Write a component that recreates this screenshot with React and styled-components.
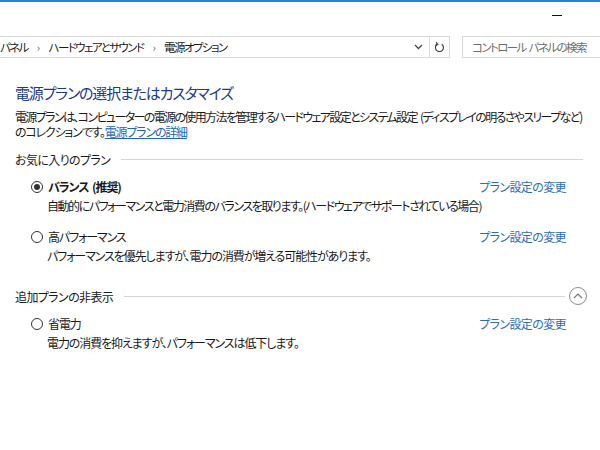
import React from "react";
import styled, { createGlobalStyle } from "styled-components";

const Global = createGlobalStyle`
  html, body { margin: 0; padding: 0; background: #fff; }
  body {
    font-family: "Noto Sans CJK JP", "Noto Sans", sans-serif;
    font-feature-settings: "palt";
    color: #1a1a1a;
    word-spacing: 2px;
    -webkit-font-smoothing: antialiased;
  }
`;

const Window = styled.div`
  width: 600px;
  height: 450px;
  overflow: hidden;
  border-top: 2px solid #2b7fd6;
  box-sizing: border-box;
  display: flex;
  flex-direction: column;
`;

const TitleBar = styled.div`
  height: 34px;
  display: flex;
  justify-content: flex-end;
  align-items: flex-start;
  padding-right: 38px;
`;

const Minimize = styled.div`
  width: 10px;
  height: 1px;
  background: #111;
  margin-top: 13px;
`;

const AddressRow = styled.div`
  display: flex;
  height: 22px;
  align-items: stretch;
  font-size: 11.5px;
  letter-spacing: -1.6px;
`;

const AddressBox = styled.div`
  width: 430px;
  box-sizing: border-box;
  border: 1px solid #d9d9d9;
  border-left: none;
  display: flex;
  align-items: center;
  white-space: nowrap;
  color: #1a1a1a;
`;

const Crumb = styled.span``;

const Sep = styled.span`
  color: #666;
  margin: 0 10px 0 9px;
  font-size: 11px;
`;

const DropChev = styled.span`
  margin-left: auto;
  margin-right: 6px;
  display: flex;
  align-items: center;
`;

const Refresh = styled.div`
  width: 20px;
  box-sizing: border-box;
  border: 1px solid #d9d9d9;
  border-left: none;
  display: flex;
  align-items: center;
  justify-content: center;
`;

const Search = styled.div`
  margin-left: 12px;
  flex: 1;
  box-sizing: border-box;
  border: 1px solid #d9d9d9;
  border-right: none;
  display: flex;
  align-items: center;
  padding-left: 9px;
  color: #6d6d6d;
  white-space: pre;
  letter-spacing: -1.6px;
`;

const Content = styled.div`
  padding: 0 17px 0 15px;
`;

const Title = styled.h1`
  margin: 24px 0 0;
  font-size: 15px;
  font-weight: 400;
  color: #1c3a8c;
  line-height: 22px;
  letter-spacing: -1.2px;
  white-space: nowrap;
`;

const Desc = styled.p`
  margin: 5px 0 0;
  font-size: 12px;
  line-height: 15px;
  white-space: pre;
`;

const DescLine = styled.span`
  display: block;
  letter-spacing: ${(p) => p.$ls || -1.2}px;
`;

const Link = styled.a`
  color: #1b66c4;
  text-decoration: ${(p) => (p.$underline ? "underline" : "none")};
  cursor: pointer;
`;

const GroupHeader = styled.div`
  display: flex;
  align-items: center;
  margin-top: ${(p) => p.$mt}px;
  font-size: 12px;
  height: 18px;
  letter-spacing: -0.6px;
`;

const Rule = styled.div`
  flex: 1;
  height: 1px;
  background: #d4d4d4;
  margin-left: 11px;
`;

const Collapse = styled.div`
  width: 18px;
  height: 18px;
  box-sizing: border-box;
  border: 1px solid #8c8c8c;
  border-radius: 50%;
  margin-left: 4px;
  margin-right: -4px;
  display: flex;
  align-items: center;
  justify-content: center;
`;

const Plan = styled.div`
  margin-top: ${(p) => p.$mt}px;
  margin-right: 17px;
  padding-left: 16px;
  display: grid;
  grid-template-columns: 1fr auto;
  row-gap: 3px;
  font-size: 12px;
  line-height: 16px;
  letter-spacing: -1.1px;
  white-space: pre;
`;

const PlanName = styled.div`
  display: flex;
  align-items: center;
  font-weight: ${(p) => (p.$bold ? 700 : 400)};
`;

const Radio = styled.span`
  width: 12px;
  height: 12px;
  box-sizing: border-box;
  border: 1px solid #333;
  border-radius: 50%;
  margin-right: 5px;
  display: flex;
  align-items: center;
  justify-content: center;
  &::after {
    content: "";
    width: 6px;
    height: 6px;
    border-radius: 50%;
    background: ${(p) => (p.$checked ? "#333" : "transparent")};
  }
`;

const PlanLink = styled(Link)`
  color: #2b6cc0;
  letter-spacing: -0.6px;
`;

const PlanDesc = styled.div`
  grid-column: 1 / 3;
  padding-left: 16px;
  letter-spacing: ${(p) => p.$ls || -1.1}px;
`;

const plans = [
  {
    name: "バランス (推奨)",
    bold: true,
    checked: true,
    ls: -1.45,
    desc: "自動的にパフォーマンスと電力消費のバランスを取ります。(ハードウェアでサポートされている場合)",
  },
  {
    name: "高パフォーマンス",
    desc: "パフォーマンスを優先しますが、電力の消費が増える可能性があります。",
  },
  {
    name: "省電力",
    desc: "電力の消費を抑えますが、パフォーマンスは低下します。",
  },
];

function PlanItem({ p, mt }) {
  return (
    <Plan $mt={mt}>
      <PlanName $bold={p.bold}>
        <Radio $checked={p.checked} />
        {p.name}
      </PlanName>
      <PlanLink>プラン設定の変更</PlanLink>
      <PlanDesc $ls={p.ls}>{p.desc}</PlanDesc>
    </Plan>
  );
}

export default function App() {
  return (
    <>
      <Global />
      <Window>
        <TitleBar>
          <Minimize />
        </TitleBar>
        <AddressRow>
          <AddressBox>
            <Crumb>パネル</Crumb>
            <Sep>›</Sep>
            <Crumb>ハードウェアとサウンド</Crumb>
            <Sep>›</Sep>
            <Crumb>電源オプション</Crumb>
            <DropChev>
              <svg width="9" height="6" viewBox="0 0 9 6">
                <path d="M1 1 L4.5 4.5 L8 1" fill="none" stroke="#444" strokeWidth="1.3" />
              </svg>
            </DropChev>
          </AddressBox>
          <Refresh>
            <svg width="11" height="12" viewBox="0 0 11 12">
              <path d="M7.6 3.2 A4 4 0 1 1 3.2 3.3" fill="none" stroke="#444" strokeWidth="1.2" />
              <path d="M2 1.2 L3.8 3.4 L1.2 4.4" fill="none" stroke="#444" strokeWidth="1.2" />
            </svg>
          </Refresh>
          <Search>コントロール パネルの検索</Search>
        </AddressRow>
        <Content>
          <Title>電源プランの選択またはカスタマイズ</Title>
          <Desc>
            <DescLine $ls={-1.63}>
              電源プランは、コンピューターの電源の使用方法を管理するハードウェア設定とシステム設定 (ディスプレイの明るさやスリープなど)
            </DescLine>
            <DescLine>
              のコレクションです。<Link $underline>電源プランの詳細</Link>
            </DescLine>
          </Desc>
          <GroupHeader $mt={11}>
            お気に入りのプラン
            <Rule />
          </GroupHeader>
          <PlanItem p={plans[0]} mt={11} />
          <PlanItem p={plans[1]} mt={15} />
          <GroupHeader $mt={23}>
            追加プランの非表示
            <Rule />
            <Collapse>
              <svg width="10" height="6" viewBox="0 0 10 6">
                <path d="M1 5 L5 1 L9 5" fill="none" stroke="#777" strokeWidth="1.2" />
              </svg>
            </Collapse>
          </GroupHeader>
          <PlanItem p={plans[2]} mt={11} />
        </Content>
      </Window>
    </>
  );
}
